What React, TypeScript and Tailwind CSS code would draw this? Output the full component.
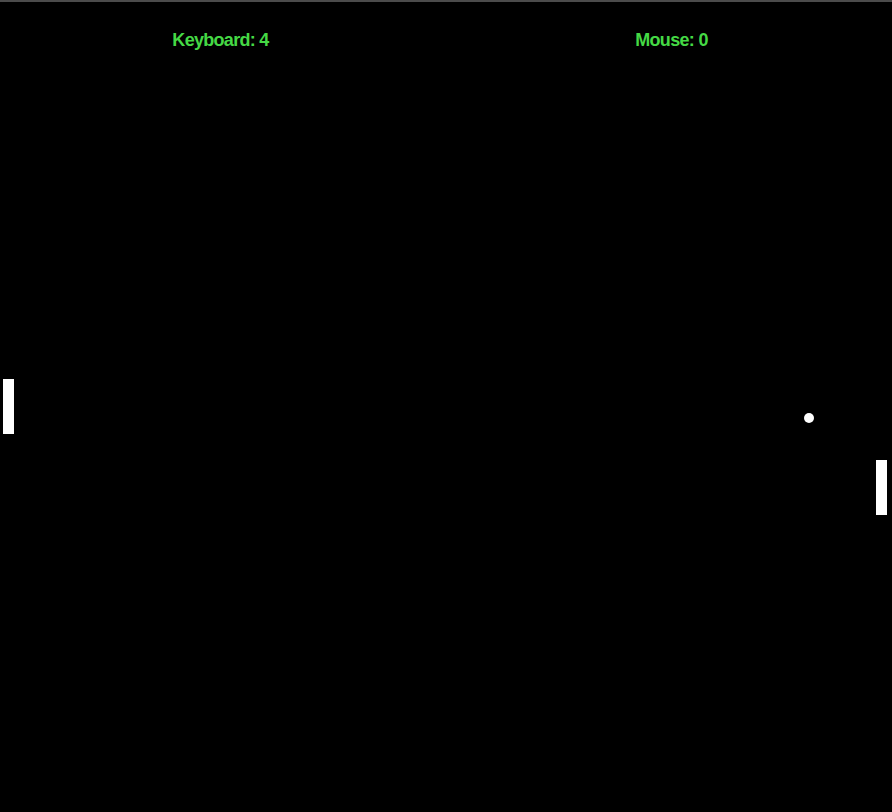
export default function App() {
  return (
    <div className="relative h-[812px] w-[892px] overflow-hidden border-t-2 border-[#4b4b4b] bg-black font-['Liberation_Sans',Arial,sans-serif]">
      <div className="flex pt-[28px]">
        <div className="flex-1 pr-[8px] text-center text-[18px] font-bold leading-5 tracking-[-0.7px] text-[#45d945]">Keyboard: 4</div>
        <div className="flex-1 pl-[2px] text-center text-[18px] font-bold leading-5 tracking-[-0.7px] text-[#45d945]">Mouse: 0</div>
      </div>
      <div className="absolute left-[3px] top-[377px] h-[55px] w-[11px] bg-white" />
      <div className="absolute left-[876px] top-[458px] h-[55px] w-[11px] bg-white" />
      <div className="absolute left-[804px] top-[411px] h-[10px] w-[10px] rounded-full bg-white" />
    </div>
  );
}
